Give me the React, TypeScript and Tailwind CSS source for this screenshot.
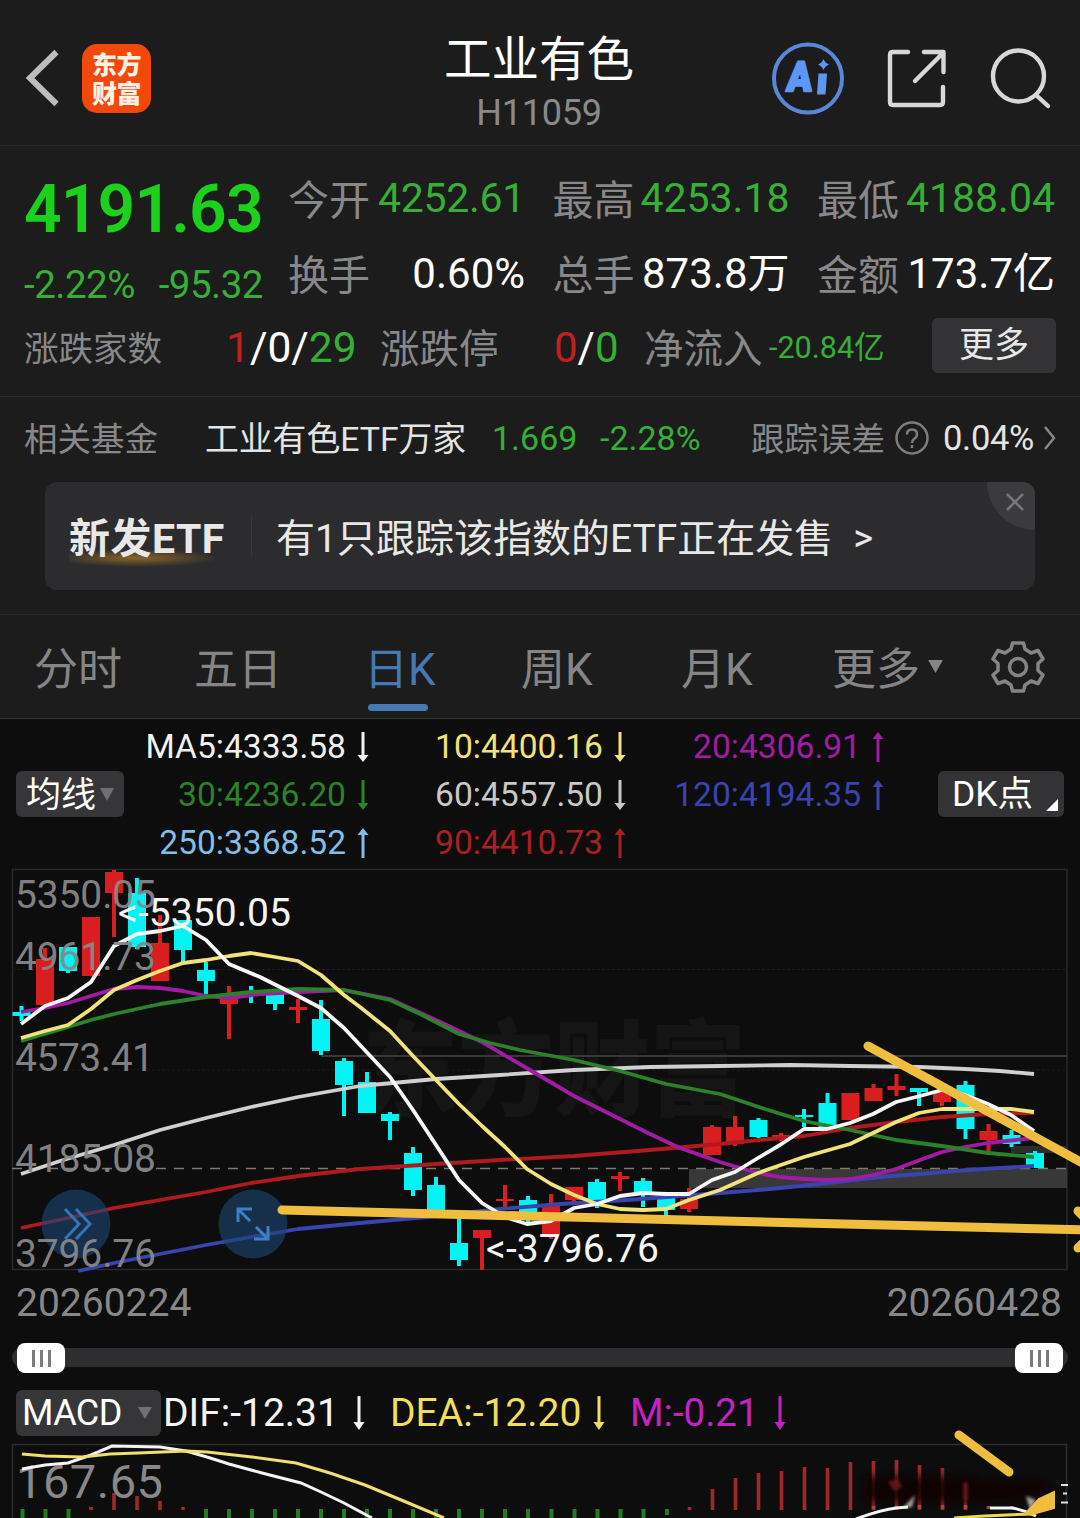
const candles = [
    // x, color, bodyTop, bodyBottom, wickTop, wickBottom
    [21.5, 'c', 1012, 1016, 1006, 1021],
    [45, 'r', 959, 1005, 948, 1005],
    [68, 'c', 947, 971, 947, 973],
    [91, 'r', 917, 976, 917, 976],
    [114, 'r', 872, 893, 870, 937],
    [137, 'c', 893, 947, 878, 949],
    [160, 'r', 943, 981, 915, 981],
    [183, 'c', 920, 950, 920, 963],
    [206, 'c', 970, 981, 962, 994],
    [229, 'r', 998, 1004, 986, 1039],
    [251, 'c', 991, 993, 986, 1003],
    [275, 'c', 993, 1004, 993, 1010],
    [298, 'r', 1007, 1010, 999, 1023],
    [321, 'c', 1019, 1051, 1000, 1055],
    [344, 'c', 1061, 1085, 1058, 1116],
    [367, 'c', 1082, 1113, 1072, 1113],
    [390, 'c', 1114, 1121, 1112, 1140],
    [413, 'c', 1153, 1190, 1147, 1196],
    [436, 'c', 1185, 1210, 1177, 1210],
    [459, 'c', 1243, 1260, 1218, 1266],
    [482, 'r', 1230, 1238, 1230, 1270],
    [505, 'r', 1199, 1201, 1185, 1208],
    [528, 'c', 1200, 1213, 1196, 1222],
    [551, 'r', 1205, 1235, 1194, 1239],
    [574, 'r', 1187, 1200, 1187, 1202],
    [597, 'c', 1182, 1200, 1179, 1208],
    [620, 'r', 1176, 1179, 1172, 1191],
    [643, 'c', 1181, 1193, 1178, 1207],
    [666, 'c', 1197, 1210, 1197, 1216],
    [689, 'r', 1199, 1209, 1188, 1212],
    [712, 'r', 1127, 1155, 1125, 1155],
    [735, 'r', 1127, 1144, 1116, 1146],
    [758.5, 'c', 1120, 1137, 1118, 1138],
    [781, 'r', 1135, 1138, 1133, 1141],
    [804, 'c', 1115, 1117, 1109, 1127],
    [827.5, 'c', 1103, 1127, 1093, 1127],
    [850.5, 'r', 1093, 1120, 1093, 1120],
    [873.5, 'r', 1088, 1101, 1084, 1101],
    [896.5, 'r', 1086, 1090, 1074, 1096],
    [919, 'c', 1088, 1092, 1088, 1106],
    [942, 'r', 1092, 1102, 1092, 1106],
    [965.5, 'c', 1085, 1129, 1081, 1139],
    [988.5, 'r', 1131, 1140, 1124, 1152],
    [1011.5, 'c', 1135, 1144, 1130, 1147],
    [1035, 'c', 1153, 1168, 1151, 1168],
] as [number, string, number, number, number, number][]

const lines = [
    { color: '#d0d0d0', points: [21,1174, 60,1161, 114,1145, 160,1130, 206,1118, 251,1107, 298,1097, 360,1086, 436,1079, 500,1075, 574,1070, 650,1067, 720,1066, 790,1065, 850,1066, 920,1067, 965,1069, 1000,1071, 1034,1074] },
    { color: '#b01a1e', points: [21,1228, 68,1218, 114,1208, 206,1192, 251,1183, 298,1176, 360,1169, 436,1164, 500,1160, 574,1156, 650,1150, 720,1144, 770,1139, 804,1136, 850,1128, 896,1122, 942,1117, 988,1114, 1034,1113] },
    { color: '#3a44b0', points: [78,1271, 114,1263, 160,1254, 206,1245, 251,1237, 298,1229, 360,1223, 427,1217, 500,1209, 560,1204, 627,1200, 720,1193, 770,1189, 820,1184, 880,1177, 920,1174, 967,1170, 1034,1166] },
    { color: '#a31ba3', points: [21,1012, 45,1008, 68,1003, 91,996, 114,989, 137,987, 160,988, 183,991, 206,996, 229,998, 260,994, 298,992, 344,990, 390,999, 436,1020, 482,1042, 530,1070, 574,1096, 620,1119, 650,1134, 680,1148, 700,1155, 720,1162, 740,1168, 758,1173, 780,1177, 804,1179, 827,1180, 850,1179, 873,1175, 896,1169, 920,1160, 942,1152, 965,1147, 988,1143, 1034,1138] },
    { color: '#2a8229', points: [21,1041, 68,1027, 91,1020, 114,1014, 160,1004, 206,997, 251,992, 298,989, 344,990, 390,1000, 420,1014, 459,1034, 490,1043, 520,1050, 574,1060, 620,1071, 666,1084, 720,1094, 765,1109, 804,1121, 850,1130, 896,1140, 942,1146, 988,1153, 1034,1157] },
    { color: '#f2e27a', points: [21,1038, 45,1031, 68,1025, 91,1009, 114,990, 137,980, 160,971, 183,963, 206,960, 229,956, 251,953, 275,957, 298,961, 321,975, 344,995, 360,1007, 390,1031, 413,1056, 436,1080, 459,1104, 482,1126, 505,1147, 527,1169, 551,1184, 574,1195, 597,1204, 620,1209, 643,1210, 666,1209, 689,1200, 720,1190, 758,1173, 804,1157, 850,1144, 873,1133, 896,1122, 919,1113, 942,1109, 965,1109, 1011,1109, 1034,1112] },
    { color: '#f7f7f7', points: [21,1024, 45,1006, 68,998, 91,982, 114,946, 137,934, 160,931, 183,926, 206,940, 229,964, 260,977, 298,996, 321,1008, 344,1028, 360,1045, 390,1077, 413,1110, 436,1145, 459,1180, 482,1203, 505,1217, 527,1224, 551,1221, 574,1208, 597,1204, 620,1196, 643,1193, 666,1194, 689,1194, 712,1180, 735,1172, 758,1158, 780,1145, 804,1129, 827,1129, 850,1123, 873,1114, 896,1102, 920,1096, 942,1090, 965,1095, 988,1104, 1011,1115, 1034,1131] },
]

const axisLabels = [
    { y: 907.5, label: '5350.05', width: 141 },
    { y: 969.5, label: '4961.73', width: 141 },
    { y: 1070.5, label: '4573.41', width: 139 },
    { y: 1171.5, label: '4185.08', width: 141 },
    { y: 1266.5, label: '3796.76', width: 141 },
]

const redBars = [
    [91, 1507], [114, 1493], [137, 1496], [160, 1501], [183, 1507], [689.5, 1507],
    [712.5, 1489], [735.5, 1478], [758.5, 1473], [781.5, 1471], [804.5, 1467], [827.5, 1468],
    [850.5, 1462], [873.5, 1461], [896.5, 1460], [919.5, 1465], [942.5, 1468], [965.5, 1482],
]

const greenBars = [22.5, 45.5, 68.5, 206, 229, 252, 275, 298, 321, 344, 367, 390, 413, 436, 459, 482, 505, 528, 551.5, 574.5, 597.5, 620.5, 643.5]

function Arrow({ up = false, size = 'h-8' }: { up?: boolean, size?: string }) {
    return (
        <svg viewBox="0 0 12 32" className={`w-3 shrink-0 ${size} ${up ? 'rotate-180' : ''}`} preserveAspectRatio="none" fill="none" stroke="currentColor" strokeWidth="3">
            <path d="M6 1v26" />
            <path d="M.5 24h11L6 31z" fill="currentColor" stroke="none" />
        </svg>
    )
}

function Header() {
    return (
        <header className="flex h-[146px] w-full shrink-0 border-b border-[#2b2b2b] relative">
            <div className="flex items-center pl-6 pt-[11px]">
                <svg viewBox="0 0 36 60" className="w-9 h-[60px]" fill="none" stroke="#bdbdbd" strokeWidth="6">
                    <path d="M32.500 4 6 30l26.500 26" />
                </svg>
                <div className="ml-[22px] flex h-[69px] w-[69px] flex-col items-center justify-center rounded-[15px] bg-[#f2480c] pt-[3px] text-[25px] leading-[29px] font-black tracking-[-0.5px] text-[#fff3e4]">
                    <span>东方</span>
                    <span>财富</span>
                </div>
            </div>
            <div className="absolute left-[439px] top-0 flex w-[200px] flex-col items-center">
                <h1 className="mt-[36px] text-[47.500px] leading-[48px] text-white whitespace-nowrap">工业有色</h1>
                <p className="mt-[11px] text-[36px] leading-[36px] tracking-[-0.200px] text-[#8a8a8d]">H11059</p>
            </div>
            <svg viewBox="0 0 320 90" className="ml-auto mt-[34px] h-[90px] w-[320px]" fill="none">
                <circle cx="48" cy="44.500" r="34" stroke="#5a88d8" strokeWidth="4" />
                <text x="31" y="57" transform="skewX(-5)" fontSize="41" fontWeight="900" fill="#5e96f5" stroke="#5e96f5" strokeWidth="2.500" strokeLinejoin="round" textLength="25" lengthAdjust="spacingAndGlyphs">A</text>
                <path d="M58.500 39.500h8.500l-1.500 21h-8.500z" fill="#5e96f5" />
                <path d="M63.500 25q1.500 4 5.500 5.500-4 1.500-5.500 5.500-1.500-4-5.500-5.500 4-1.500 5.500-5.500z" fill="#5e96f5" />
                <g stroke="#d8d8d8" strokeWidth="4.400" strokeLinecap="round" strokeLinejoin="round">
                    <path d="M148 18h-15q-3 0-3 3v47q0 3 3 3h47q3 0 3-3V53" />
                    <path d="M164 18h19.500v20M182 20l-27 27" />
                    <circle cx="258.500" cy="42" r="25.500" />
                    <path d="m276 61 12 11" />
                </g>
            </svg>
        </header>
    )
}

function Quote() {
    return (
        <section className="h-[251px] shrink-0 border-b border-[#2b2b2b] pl-6 pr-6">
            <div className="flex h-[163px]">
                <div className="w-[264px] pt-[31px]">
                    <div className="text-[66px] leading-[66px] font-semibold tracking-[-0.900px] text-[#1bd11b]">4191.63</div>
                    <div className="mt-[23px] flex w-[239px] justify-between text-[38.500px] leading-[38px] tracking-[-0.500px] text-[#35b035]">
                        <span>-2.22%</span>
                        <span>-95.32</span>
                    </div>
                </div>
                <div className="grid grid-cols-[237px_237px_238px] gap-x-[27.500px] grid-rows-[75px_75px] pt-[15px] text-[41px] leading-none whitespace-nowrap text-[#88888b]">
                    <div className="flex items-center justify-between"><span className="pt-[5px]">今开</span><span className="tracking-[-0.300px] text-[#35b035]">4252.61</span></div>
                    <div className="flex items-center justify-between"><span className="pt-[5px]">最高</span><span className="text-[#35b035]">4253.18</span></div>
                    <div className="flex items-center justify-between"><span className="pt-[5px]">最低</span><span className="text-[#35b035]">4188.04</span></div>
                    <div className="flex items-center justify-between"><span className="pt-[5px]">换手</span><span className="text-[42px] text-white">0.60%</span></div>
                    <div className="flex items-center justify-between"><span className="pt-[5px]">总手</span><span className="text-[42px] text-white">873.8万</span></div>
                    <div className="flex items-center justify-between"><span className="pt-[5px]">金额</span><span className="text-[42px] text-white">173.7亿</span></div>
                </div>
            </div>
            <div className="flex h-[78px] items-center leading-none whitespace-nowrap text-[#88888b]">
                <span className="w-[202px] pt-[2px] text-[34.500px]">涨跌家数</span>
                <span className="w-[154px] text-[42.500px] text-white"><span className="text-[#c02020]">1</span>/0/<span className="text-[#35b035]">29</span></span>
                <span className="w-[174px] pt-[4px] text-[39.500px]">涨跌停</span>
                <span className="w-[90px] text-[42px] text-white"><span className="text-[#c02020]">0</span>/<span className="text-[#35b035]">0</span></span>
                <span className="w-[125px] pt-[4px] text-[39.500px]">净流入</span>
                <span className="text-[30.500px] text-[#35b035]">-20.84亿</span>
                <button className="mb-[6px] ml-auto h-[55px] w-[124px] rounded-md bg-[#333335] text-[35px] leading-none text-[#e8e8e8]">更多</button>
            </div>
        </section>
    )
}

function RelatedFund() {
    return (
        <section className="h-[218px] shrink-0 border-b border-[#2b2b2b]">
            <div className="flex h-[82px] items-center pl-6 text-[33.500px] leading-none whitespace-nowrap text-[#88888b]">
                <span className="w-[181px] pt-[3px]">相关基金</span>
                <span className="w-[287px] pt-[3px] text-[33.800px] text-[#e4e4e4]">工业有色ETF万家</span>
                <span className="w-[108px] text-[34px] text-[#35b035]">1.669</span>
                <span className="w-[151px] text-[34px] text-[#35b035]">-2.28%</span>
                <span className="w-[144px] pt-[3px]">跟踪误差</span>
                <svg viewBox="0 0 34 34" className="h-[34px] w-[34px]" fill="none" stroke="#7d7d80" strokeWidth="2.500">
                    <circle cx="17" cy="17" r="15.500" />
                    <path d="M12 13.500q0-5 5-5t5 5q0 2.500-3 4.500-2 1.500-2 4M17 24v3" />
                </svg>
                <span className="ml-[14px] text-[34.500px] tracking-[-0.300px] text-[#e4e4e4]">0.04%</span>
                <svg viewBox="0 0 14 26" className="ml-[9px] h-[26px] w-[14px]" fill="none" stroke="#88888b" strokeWidth="2.500">
                    <path d="m2 2 9 11-9 11" />
                </svg>
            </div>
            <div className="relative ml-[45px] mt-[3px] flex h-[108px] w-[990px] items-center overflow-hidden rounded-xl bg-[#2c2c2e] pl-6 leading-none whitespace-nowrap text-[#e8e8e8]">
                <div className="relative w-[182px] pt-[6px] text-[41px] font-bold">
                    <span className="absolute left-0 top-[36px] h-[18px] w-[150px] bg-radial-[at_45%_50%] from-[#8a642a] to-transparent to-70%"></span>
                    <span className="relative tracking-[0.500px]">新发ETF</span>
                </div>
                <span className="h-10 w-px bg-[#38383a]"></span>
                <span className="ml-6 pt-[7px] text-[39px]">有1只跟踪该指数的ETF正在发售</span>
                <span className="ml-5 pt-[4px] text-[38px]">&gt;</span>
                <svg viewBox="0 0 48 48" className="absolute right-0 top-0 h-12 w-12">
                    <path d="M0 0h48v48A48 48 0 0 1 0 0z" fill="#3b3b3d" />
                    <path d="m20 12 16 16m0-16L20 28" stroke="#77777a" strokeWidth="2.500" />
                </svg>
            </div>
        </section>
    )
}

function Tabs() {
    return (
        <nav className="flex h-[104px] shrink-0 items-center border-b border-[#363636] text-[44px] leading-none whitespace-nowrap text-[#858587]">
            <span className="ml-[34px] w-[160px] pt-[6px]">分时</span>
            <span className="w-[170px] pt-[6px]">五日</span>
            <span className="relative w-[157px] pt-[6px] text-[#4678b4]">
                日K
                <span className="absolute left-1 top-[62px] h-[7px] w-[60px] rounded-full bg-[#4678b4]"></span>
            </span>
            <span className="w-[160px] pt-[6px]">周K</span>
            <span className="w-[151px] pt-[6px]">月K</span>
            <span className="w-[96px] pt-[6px]">更多</span>
            <svg viewBox="0 0 16 14" className="h-[13px] w-[15px]" fill="#858587"><path d="M0 0h16L8 14z" /></svg>
            <svg viewBox="-27 -27 54 54" className="ml-[48px] h-[54px] w-[54px]" fill="none" stroke="#858587" strokeWidth="3.500" strokeLinejoin="round">
                <path d="M-5.500-24h11L7-18l6 4 7-2.500L25-8l-5 4.500v7L25 8l-5 8.500-7-2.500-6 4-1.500 6h-11L-7 18l-6-4-7 2.500L-25 8l5-4.500v-7L-25-8l5-8.500 7 2.500 6-4z" />
                <circle r="8.500" />
            </svg>
        </nav>
    )
}

function Averages() {
    return (
        <section className="flex h-[150px] shrink-0 items-start text-[33.600px] leading-none whitespace-nowrap">
            <button className="ml-4 mt-[52px] flex h-[46px] w-[108px] items-center justify-center gap-1 rounded-md bg-[#363638] text-[35px] leading-none text-white">
                <span className="pt-[3px]">均线</span>
                <svg viewBox="0 0 14 13" className="h-[13px] w-[14px]" fill="#707070"><path d="M0 0h14L7 13z" /></svg>
            </button>
            <div className="grid w-[245px] grid-rows-[48px_48px_48px] pt-[4px]">
                <div className="flex items-center justify-end gap-[11px] text-[#f2f2f2]">MA5:4333.58<Arrow /></div>
                <div className="flex items-center justify-end gap-[11px] text-[#2a8229]">30:4236.20<Arrow /></div>
                <div className="flex items-center justify-end gap-[11px] text-[#84bce8]">250:3368.52<Arrow up /></div>
            </div>
            <div className="grid w-[257px] grid-rows-[48px_48px_48px] pt-[4px]">
                <div className="flex items-center justify-end gap-[11px] text-[#f2e27a]">10:4400.16<Arrow /></div>
                <div className="flex items-center justify-end gap-[11px] text-[#c8c8c8]">60:4557.50<Arrow /></div>
                <div className="flex items-center justify-end gap-[11px] text-[#a82024]">90:4410.73<Arrow up /></div>
            </div>
            <div className="grid w-[258px] grid-rows-[48px_48px] pt-[4px]">
                <div className="flex items-center justify-end gap-[11px] text-[#a31ba3]">20:4306.91<Arrow up /></div>
                <div className="flex items-center justify-end gap-[11px] text-[#3a44b0]">120:4194.35<Arrow up /></div>
            </div>
            <button className="relative ml-[54px] mt-[52px] h-[46px] w-[126px] rounded-md bg-[#333335] pt-[2px] pl-[14px] text-left text-[35.500px] leading-none text-white">
                DK点
                <svg viewBox="0 0 12 12" className="absolute bottom-[6px] right-[6px] h-3 w-3" fill="#fff"><path d="M12 0v12H0z" /></svg>
            </button>
        </section>
    )
}

function KLineChart() {
    return (
        <svg viewBox="0 869 1080 403" className="h-[403px] w-full shrink-0 overflow-visible" fill="none">
            <rect x="12.500" y="869.500" width="1054.500" height="400" stroke="#2a2a2a" strokeWidth="1.500" />
            <path d="M12 969.500h1055M12 1070h1055" stroke="#1d1d1d" strokeDasharray="3 2" />
            <text x="362" y="1108" fontSize="104" fontWeight="900" fill="#151515" textLength="384" lengthAdjust="spacingAndGlyphs">东方财富</text>
            <path d="M321 1056h746" stroke="#383838" strokeWidth="2" />
            <rect x="689" y="1169" width="378" height="19" fill="#383838" />
            <rect x="1011" y="1146" width="56" height="7" fill="#2c2c2c" />
            <path d="M12 1168.500h1055" stroke="#85786a" strokeWidth="1.600" strokeDasharray="10 8" />
            {candles.map(([x, kind, top, bottom, high, low]) => (
                <g key={x} fill={kind === 'r' ? '#d81e1e' : '#00f4f4'}>
                    <rect x={x - 2} y={high} width="4" height={low - high} />
                    <rect x={x - 9} y={top} width="18" height={bottom - top} />
                </g>
            ))}
            {lines.map((line) => (
                <polyline key={line.color} points={line.points.join(' ')} stroke={line.color} strokeWidth="3.800" strokeLinejoin="round" />
            ))}
            <circle cx="76" cy="1224" r="34.500" fill="#1d4674" fillOpacity="0.600" />
            <path d="m65 1209 14 15-14 15M76 1209l14 15-14 15" stroke="#3773b8" strokeWidth="3" />
            <circle cx="253" cy="1224" r="34.500" fill="#1d4674" fillOpacity="0.600" />
            <path d="M238 1222v-13h14M238 1209l12 12M268 1226v13h-14M268 1239l-12-12" stroke="#3d80c4" strokeWidth="3" />
            <g fontSize="39" fill="#88888a">
                {axisLabels.map(({ y, label, width }) => (
                    <text key={label} x="15" y={y} textLength={width} fillOpacity="0.950">{label}</text>
                ))}
            </g>
            <g fontSize="39" fill="#f4f4f4">
                <text x="118" y="925.500" textLength="173">&lt;-5350.05</text>
                <text x="486" y="1261.500" textLength="173">&lt;-3796.76</text>
            </g>
            <g stroke="#efbd40" strokeWidth="9" strokeLinecap="round">
                <path d="M282 1210 1090 1230" />
                <path d="m868 1046 220 120" />
                <path d="m1078 1211 12 12M1078 1248l12-12" />
            </g>
        </svg>
    )
}

function RangeSlider() {
    return (
        <section className="h-[118px] shrink-0 pt-[10px]">
            <div className="flex justify-between pl-4 pr-[18px] text-[39px] leading-[42px] text-[#88888a]">
                <span>20260224</span>
                <span>20260428</span>
            </div>
            <div className="relative mx-3 mt-[19px] flex h-[30px] items-center justify-between px-[5px]">
                <div className="absolute inset-x-0 top-[5px] h-[19px] rounded-full bg-[#2e2e31]"></div>
                <Handle />
                <Handle />
            </div>
        </section>
    )
}

function Handle() {
    return (
        <div className="relative flex h-[30px] w-[48px] items-center justify-center gap-[5px] rounded-lg bg-white">
            <span className="h-[17px] w-[3px] bg-[#7b7b7b]"></span>
            <span className="h-[17px] w-[3px] bg-[#7b7b7b]"></span>
            <span className="h-[17px] w-[3px] bg-[#7b7b7b]"></span>
        </div>
    )
}

function Macd() {
    return (
        <section className="shrink-0">
            <div className="flex h-[46px] items-center text-[39px] leading-none whitespace-nowrap">
                <button className="ml-4 flex h-[46px] w-[145px] items-center justify-between rounded-md bg-[#363638] pl-[6px] pr-[9px] text-[36px] leading-none tracking-[-0.600px] text-white">
                    MACD
                    <svg viewBox="0 0 14 12" className="h-3 w-[14px]" fill="#707070"><path d="M0 0h14L7 12z" /></svg>
                </button>
                <span className="ml-[2px] flex w-[227px] items-center gap-[14px] text-[#f4f4f4]">DIF:-12.31<Arrow size="h-[36px]" /></span>
                <span className="flex w-[240px] items-center gap-[12px] text-[#f0de5c]">DEA:-12.20<Arrow size="h-[36px]" /></span>
                <span className="flex items-center gap-[15px] text-[38.500px] text-[#c422c4]">M:-0.21<Arrow size="h-[36px]" /></span>
            </div>
            <svg viewBox="0 1436 1080 82" className="h-[82px] w-full overflow-visible" fill="none">
                <defs>
                    <filter id="soft" x="-20%" y="-50%" width="140%" height="200%"><feGaussianBlur stdDeviation="4" /></filter>
                    <filter id="haze" x="-50%" y="-50%" width="200%" height="200%"><feGaussianBlur stdDeviation="1.8" /></filter>
                </defs>
                <path d="M12.500 1518v-73.500h1054V1518" stroke="#2e2e2e" strokeWidth="1.500" />
                {redBars.map(([x, top]) => (
                    <path key={x} d={`M${x} ${top}V1510`} stroke="#a0282a" strokeWidth="3.600" />
                ))}
                {greenBars.map((x) => (
                    <path key={x} d={`M${x} 1509V1518`} stroke="#237a28" strokeWidth="4" />
                ))}
                <path d="M667 1509v6" stroke="#237a28" strokeWidth="4" />
                <text x="16" y="1497.500" fontSize="47" fill="#88888a" textLength="147">167.65</text>
                <polyline points="22,1469 45,1465 68,1463 91,1455 112,1446 160,1447 186,1451 207,1457 229,1464 262,1473 301,1483 321,1492 344,1503 372,1518" stroke="#f4f4f4" strokeWidth="3" />
                <polyline points="22,1454 45,1456 82,1457 110,1454 138,1453 186,1451 207,1452 252,1457 296,1463 330,1473 365,1485 406,1502 444,1518" stroke="#f0e070" strokeWidth="3" />
                <path d="M864 1476h106l10 6 48-2 22 4-4 10-28 7-38 2h-116z" fill="#130607" fillOpacity="0.850" filter="url(#soft)" />
                <path d="m888 1482 10-3 4 8-8 4zM963 1483h5v17h-5z" fill="#7a1c20" fillOpacity="0.700" filter="url(#haze)" />
                <path d="m903 1508 12-13-3 12zM1026 1496l10 4-6 10z" fill="#a8a49a" filter="url(#haze)" />
                <path d="M873.500 1506v3M896.500 1506v3M919.500 1505v4M942.500 1505v4M965.500 1505v4M988.500 1506v3M1011.500 1506v3" stroke="#a8404a" strokeWidth="3.600" />
                <path d="M856 1519q24-9 40-11l12-1M990 1508h22q12 2 24 8" stroke="#f4f4f4" strokeWidth="3" />
                <path d="M954 1518q36-3 80-4" stroke="#f0d84c" strokeWidth="3" />
                <path d="m959 1435 50 37" stroke="#efbd40" strokeWidth="9" strokeLinecap="round" />
                <path d="m1025 1514 14-15 15-7v16l-21 6z" fill="#efbd40" stroke="#efbd40" strokeWidth="2" />
                <path d="M1061 1485h7M1063 1493.500h4M1061 1502.500h7" stroke="#e0e0e0" strokeWidth="2" />
            </svg>
        </section>
    )
}

function App() {
    return (
        <main className="flex h-[1518px] w-[1080px] flex-col overflow-hidden bg-[#0d0d0d] font-['Roboto','Noto_Sans_CJK_SC',sans-serif]">
            <div className="flex shrink-0 flex-col bg-[#1c1c1c]">
                <Header />
                <Quote />
                <RelatedFund />
                <Tabs />
            </div>
            <Averages />
            <KLineChart />
            <RangeSlider />
            <Macd />
        </main>
    )
}

export default App
